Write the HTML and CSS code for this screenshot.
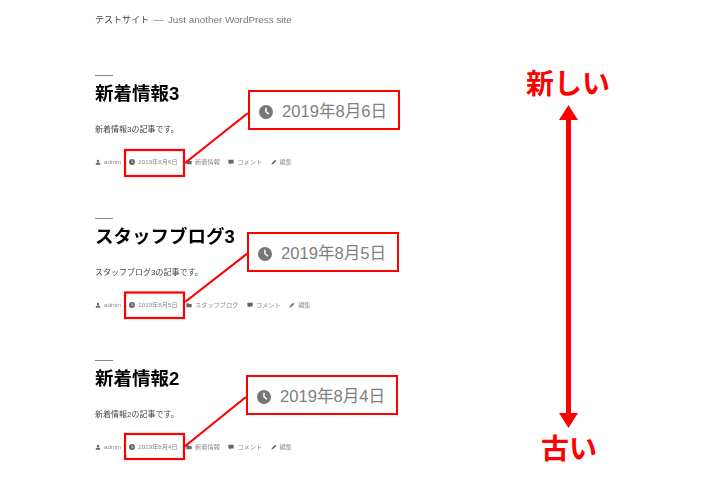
FILE: index.html
```html
<!DOCTYPE html>
<html lang="ja">
<head>
    <meta charset="UTF-8">
    <title>テストサイト</title>
    <link rel="stylesheet" href="styles.css">
</head>
<body>
    <svg width="0" height="0" class="defs">
        <symbol id="i-user" viewBox="0 0 16 16"><circle cx="8" cy="5" r="3.2"/><path d="M2 15v-2c0-2.5 2.5-4 6-4s6 1.500 6 4v2z"/></symbol>
        <symbol id="i-clock" viewBox="0 0 16 16"><path fill-rule="evenodd" d="M8 0a8 8 0 1 0 0 16A8 8 0 0 0 8 0zm-.9 3h1.700v4.400l3 2.400-1 1.300-3.700-3z"/></symbol>
        <symbol id="i-folder" viewBox="0 0 16 16"><path d="M1 3h5l2 2h7v9H1z"/></symbol>
        <symbol id="i-comment" viewBox="0 0 16 16"><path d="M1 2h14v10H8l-3 3v-3H1z"/></symbol>
        <symbol id="i-edit" viewBox="0 0 16 16"><path d="M11 2l3 3-8.500 8.500-4.500 1.500 1.500-4.500z"/></symbol>
    </svg>

    <header class="site-header">
        <span class="site-title">テストサイト</span>
        <span class="site-sep">—</span>
        <span class="site-desc">Just another WordPress site</span>
    </header>

    <main class="posts">
        <article class="post">
            <h2 class="post-title">新着情報3</h2>
            <p class="post-body">新着情報3の記事です。</p>
            <div class="post-meta">
                <span class="meta-item"><svg class="icon"><use href="#i-user"/></svg>admin</span>
                <span class="meta-item"><svg class="icon"><use href="#i-clock"/></svg>2019年8月6日</span>
                <span class="meta-item"><svg class="icon"><use href="#i-folder"/></svg>新着情報</span>
                <span class="meta-item"><svg class="icon"><use href="#i-comment"/></svg>コメント</span>
                <span class="meta-item"><svg class="icon"><use href="#i-edit"/></svg>編集</span>
            </div>
        </article>
        <article class="post">
            <h2 class="post-title">スタッフブログ3</h2>
            <p class="post-body">スタッフブログ3の記事です。</p>
            <div class="post-meta">
                <span class="meta-item"><svg class="icon"><use href="#i-user"/></svg>admin</span>
                <span class="meta-item"><svg class="icon"><use href="#i-clock"/></svg>2019年8月5日</span>
                <span class="meta-item"><svg class="icon"><use href="#i-folder"/></svg>スタッフブログ</span>
                <span class="meta-item"><svg class="icon"><use href="#i-comment"/></svg>コメント</span>
                <span class="meta-item"><svg class="icon"><use href="#i-edit"/></svg>編集</span>
            </div>
        </article>
        <article class="post">
            <h2 class="post-title">新着情報2</h2>
            <p class="post-body">新着情報2の記事です。</p>
            <div class="post-meta">
                <span class="meta-item"><svg class="icon"><use href="#i-user"/></svg>admin</span>
                <span class="meta-item"><svg class="icon"><use href="#i-clock"/></svg>2019年8月4日</span>
                <span class="meta-item"><svg class="icon"><use href="#i-folder"/></svg>新着情報</span>
                <span class="meta-item"><svg class="icon"><use href="#i-comment"/></svg>コメント</span>
                <span class="meta-item"><svg class="icon"><use href="#i-edit"/></svg>編集</span>
            </div>
        </article>
    </main>

    <!-- annotations drawn on top of the page -->
    <svg class="marks" width="720" height="480" viewBox="0 0 720 480">
        <g class="mark-lines">
            <rect x="125" y="150" width="59" height="26"/>
            <line x1="185" y1="163" x2="248" y2="113"/>
            <rect x="125" y="292.500" width="59" height="25.500"/>
            <line x1="185" y1="302" x2="248" y2="253"/>
            <rect x="125" y="434" width="59" height="25"/>
            <line x1="184" y1="447" x2="246" y2="397"/>
            <line class="mark-shaft" x1="568.500" y1="118" x2="568.500" y2="415"/>
        </g>
        <polygon class="mark-head" points="568.500,105 559,120 578,120"/>
        <polygon class="mark-head" points="568.500,428 559,413 578,413"/>
    </svg>

    <div class="callout callout-1"><svg class="icon"><use href="#i-clock"/></svg>2019年8月6日</div>
    <div class="callout callout-2"><svg class="icon"><use href="#i-clock"/></svg>2019年8月5日</div>
    <div class="callout callout-3"><svg class="icon"><use href="#i-clock"/></svg>2019年8月4日</div>

    <div class="label label-new">新しい</div>
    <div class="label label-old">古い</div>
</body>
</html>
```

FILE: styles.css
```css
html, body {
    margin: 0;
    padding: 0;
}
body {
    position: relative;
    width: 720px;
    height: 480px;
    overflow: hidden;
    background: #fff;
    color: #333;
    font-family: "Liberation Sans", "Noto Sans CJK JP", sans-serif;
}
.defs {
    position: absolute;
}
.site-header {
    display: flex;
    gap: 4.500px;
    align-items: center;
    height: 38px;
    padding-left: 95px;
    font-size: 9.900px;
    color: #777;
    filter: blur(0.3px);
}
.site-title {
    font-size: 9px;
    color: #444;
}
.posts {
    padding: 37px 0 0 95px;
    filter: blur(0.3px);
}
.post {
    height: 142.500px;
}
.post-title {
    margin: 0;
    padding-top: 7px;
    width: 300px;
    font-size: 18.500px;
    line-height: 24px;
    font-weight: bold;
    color: #000;
    position: relative;
}
.post-title::before {
    content: "";
    position: absolute;
    top: 0;
    left: 0;
    width: 18px;
    height: 1px;
    background: #888;
}
.post-body {
    margin: 17px 0 0;
    font-size: 8px;
    line-height: 14px;
    color: #444;
}
.post-meta {
    display: flex;
    gap: 8.500px;
    margin-top: 20px;
    font-size: 6.200px;
    line-height: 10px;
    color: #8a8a8a;
}
.meta-item {
    display: flex;
    align-items: center;
    gap: 3px;
}
.meta-item .icon {
    width: 6px;
    height: 6px;
    fill: #666;
}
.marks {
    position: absolute;
    top: 0;
    left: 0;
}
.mark-lines rect,
.mark-lines line {
    fill: none;
    stroke: #f00;
    stroke-width: 2.200;
}
.mark-lines .mark-shaft {
    stroke-width: 5;
}
.mark-head {
    fill: #f00;
}
.callout {
    position: absolute;
    box-sizing: border-box;
    display: flex;
    align-items: center;
    gap: 9px;
    width: 152px;
    height: 40px;
    padding-left: 9px;
    border: 2px solid #f00;
    background: #fff;
    font-size: 16.600px;
    color: #808080;
}
.callout .icon {
    width: 14px;
    height: 14px;
    fill: #777;
    margin-top: 4px;
}
.callout-1 {
    top: 90px;
    left: 248px;
}
.callout-2 {
    top: 232px;
    left: 247px;
}
.callout-3 {
    top: 375px;
    left: 246px;
}
.label {
    position: absolute;
    font-family: "Noto Sans CJK JP", sans-serif;
    font-size: 28px;
    line-height: 32px;
    font-weight: bold;
    color: #f00;
}
.label-new {
    top: 66px;
    left: 526px;
}
.label-old {
    top: 431px;
    left: 541px;
}
```
